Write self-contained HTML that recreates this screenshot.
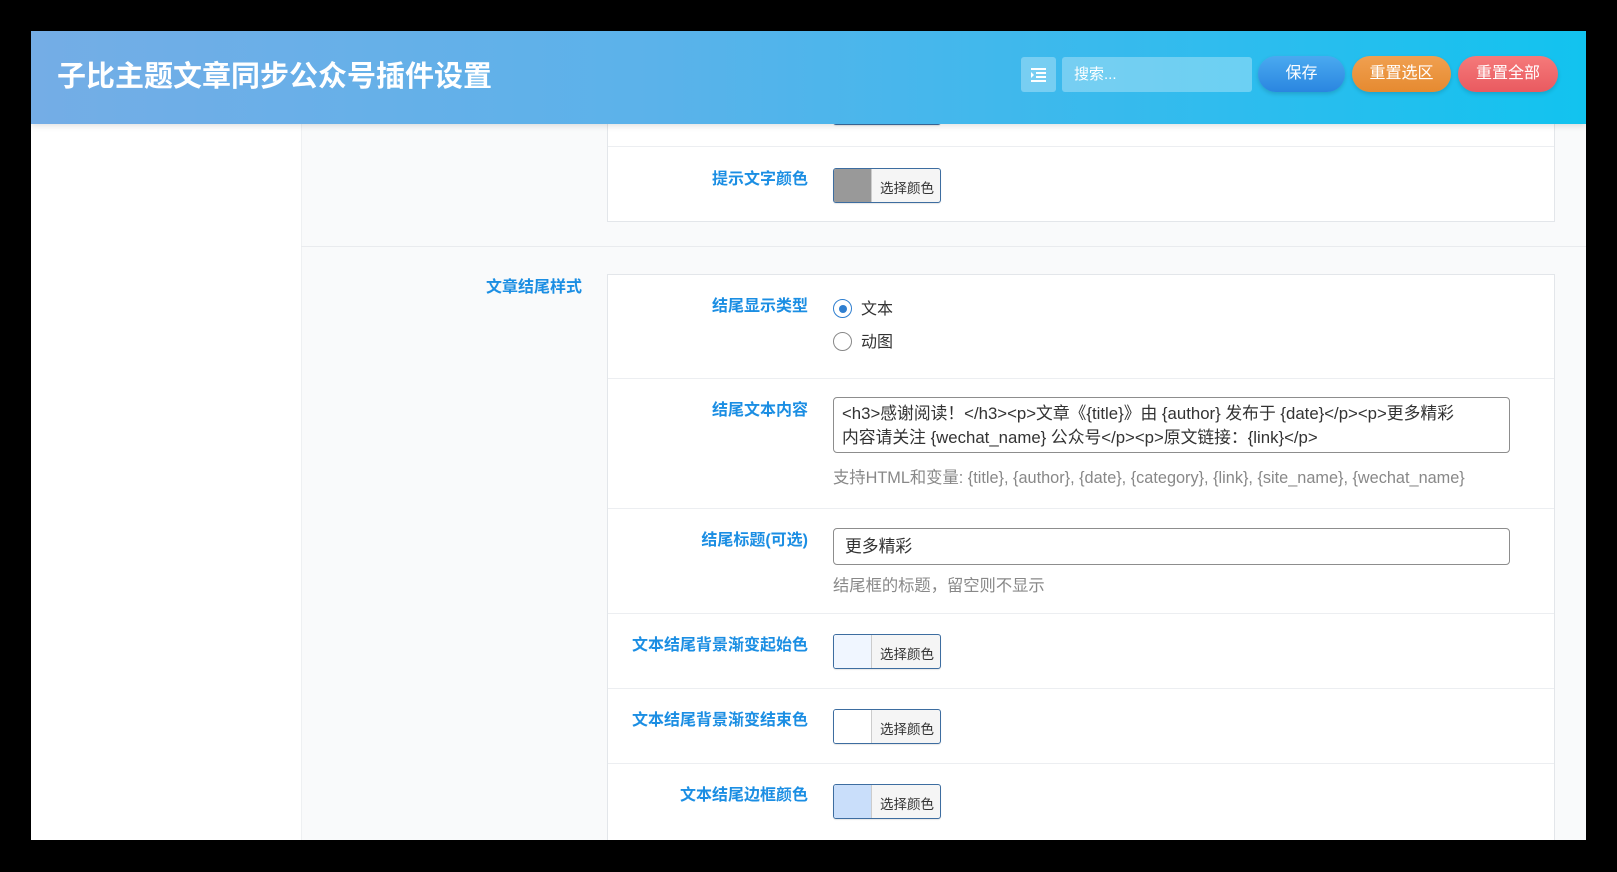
<!DOCTYPE html>
<html><head><meta charset="utf-8"><style>
*{box-sizing:border-box;margin:0;padding:0}
body{width:1617px;height:872px;background:#000;position:relative;overflow:hidden;font-family:"Liberation Sans","Noto Sans CJK SC",sans-serif}
#panel{position:absolute;left:31px;top:31px;width:1555px;height:809px;background:#fff;overflow:hidden}
#side{position:absolute;left:0;top:0;width:270px;height:100%;background:#fff}
#main{position:absolute;left:270px;top:0;right:0;height:100%;background:#f9fafb;border-left:1px solid #eef0f2}
#hdr{position:absolute;left:0;top:0;width:100%;height:93px;background:linear-gradient(90deg,#74ade6 0%,#5bb2ea 40%,#2bbdee 80%,#12c3ef 100%);box-shadow:0 2px 6px rgba(0,0,0,.12);z-index:5}
#hdr h1{position:absolute;left:26px;top:22px;color:#fff;font-size:29px;font-weight:bold;letter-spacing:0px}
.ib{position:absolute;top:26px;height:35px;border-radius:3px;background:rgba(255,255,255,.3)}
.btn{position:absolute;top:25px;height:36px;border-radius:18px;color:#fff;font-size:16px;text-align:center;line-height:36px;box-shadow:0 2px 4px rgba(0,0,0,.15)}
.card{position:absolute;left:576px;width:948px;background:#fff;border:1px solid #e3e6ea}
.row{position:absolute;left:0;width:100%;border-bottom:1px solid #eceef1}
.lbl{position:absolute;right:746px;color:#1b8ee3;font-size:16px;font-weight:bold;white-space:nowrap;text-align:right}
.pk{position:absolute;left:225px;width:108px;height:35px;border:1px solid #3d6da0;border-radius:3px;background:#f5f5f5;overflow:hidden;box-shadow:0 1px 1px rgba(0,0,0,.1)}
.pk i{position:absolute;left:0;top:0;width:38px;height:100%;border-right:1px solid #ccc}
.pk span{position:absolute;left:46px;top:8px;font-size:13.5px;color:#333}
.help{position:absolute;left:225px;color:#888;font-size:16.3px;white-space:nowrap}
.rad{position:absolute;left:225px;font-size:16px;color:#333}
.rad b{display:inline-block;width:19px;height:19px;border:1px solid #888;border-radius:50%;vertical-align:-4px;margin-right:9px;position:relative;background:#fff}
.rad b.on{border-color:#2f7fd0}
.rad b.on:after{content:"";position:absolute;left:4.5px;top:4.5px;width:8px;height:8px;border-radius:50%;background:#2f7fd0}
</style></head><body>
<div id="panel">
<div id="side"></div>
<div id="main"></div>
<div id="hdr">
<h1>子比主题文章同步公众号插件设置</h1>
<div class="ib" style="left:990px;width:35px"><svg width="35" height="35" viewBox="0 0 35 35"><g fill="#fff"><rect x="10" y="11" width="15" height="2"/><rect x="15" y="15" width="10" height="2"/><rect x="15" y="19" width="10" height="2"/><rect x="10" y="23" width="15" height="2"/><path d="M10 15l3 3-3 3z"/></g></svg></div>
<div class="ib" style="left:1031px;width:190px;color:#fff;font-size:15px;line-height:35px;padding-left:12px">搜索...</div>
<div class="btn" style="left:1227px;width:87px;background:linear-gradient(180deg,#4aaaf0,#2a86e0)">保存</div>
<div class="btn" style="left:1321px;width:99px;background:linear-gradient(180deg,#f0a050,#e68a30)">重置选区</div>
<div class="btn" style="left:1427px;width:100px;background:linear-gradient(180deg,#f57a7a,#e95a60)">重置全部</div>
</div>
<div style="position:absolute;left:270px;top:215px;right:0;height:1px;background:#e9ebee"></div>
<div class="card" style="top:-40px;height:231px">
<div class="row" style="top:0;height:155px"><div class="pk" style="top:98px;background:#f5f5f5"><i style="background:#3f6f9a"></i></div></div>
<div class="lbl" style="top:173px">提示文字颜色</div>
<div class="pk" style="top:176px"><i style="background:#999"></i><span>选择颜色</span></div>
</div>
<div style="position:absolute;left:270px;top:242px;width:281px;text-align:right;color:#1b8ee3;font-size:16px;font-weight:bold">文章结尾样式</div>
<div class="card" style="top:243px;height:620px">
<div class="row" style="top:0;height:104px">
<div class="lbl" style="top:17px">结尾显示类型</div>
<div class="rad" style="top:20px"><b class="on"></b>文本</div>
<div class="rad" style="top:53px"><b></b>动图</div>
</div>
<div class="row" style="top:104px;height:130px">
<div class="lbl" style="top:17px">结尾文本内容</div>
<div style="position:absolute;left:225px;top:18px;width:677px;height:56px;border:1px solid #8d8d8d;border-radius:4px;font-size:16.8px;color:#333;line-height:24px;padding:4px 8px">&lt;h3&gt;感谢阅读！&lt;/h3&gt;&lt;p&gt;文章《{title}》由 {author} 发布于 {date}&lt;/p&gt;&lt;p&gt;更多精彩<br>内容请关注 {wechat_name} 公众号&lt;/p&gt;&lt;p&gt;原文链接：{link}&lt;/p&gt;</div>
<div class="help" style="top:85px">支持HTML和变量: {title}, {author}, {date}, {category}, {link}, {site_name}, {wechat_name}</div>
</div>
<div class="row" style="top:234px;height:105px">
<div class="lbl" style="top:17px">结尾标题(可选)</div>
<div style="position:absolute;left:225px;top:19px;width:677px;height:37px;border:1px solid #8d8d8d;border-radius:4px;font-size:16.8px;color:#333;line-height:35px;padding-left:11px">更多精彩</div>
<div class="help" style="top:63px">结尾框的标题，留空则不显示</div>
</div>
<div class="row" style="top:339px;height:75px">
<div class="lbl" style="top:17px">文本结尾背景渐变起始色</div>
<div class="pk" style="top:20px"><i style="background:#f0f6ff"></i><span>选择颜色</span></div>
</div>
<div class="row" style="top:414px;height:75px">
<div class="lbl" style="top:17px">文本结尾背景渐变结束色</div>
<div class="pk" style="top:20px"><i style="background:#fff"></i><span>选择颜色</span></div>
</div>
<div class="row" style="top:489px;height:131px">
<div class="lbl" style="top:17px">文本结尾边框颜色</div>
<div class="pk" style="top:20px"><i style="background:#c9defa"></i><span>选择颜色</span></div>
</div>
</div>
</div>
</body></html>
